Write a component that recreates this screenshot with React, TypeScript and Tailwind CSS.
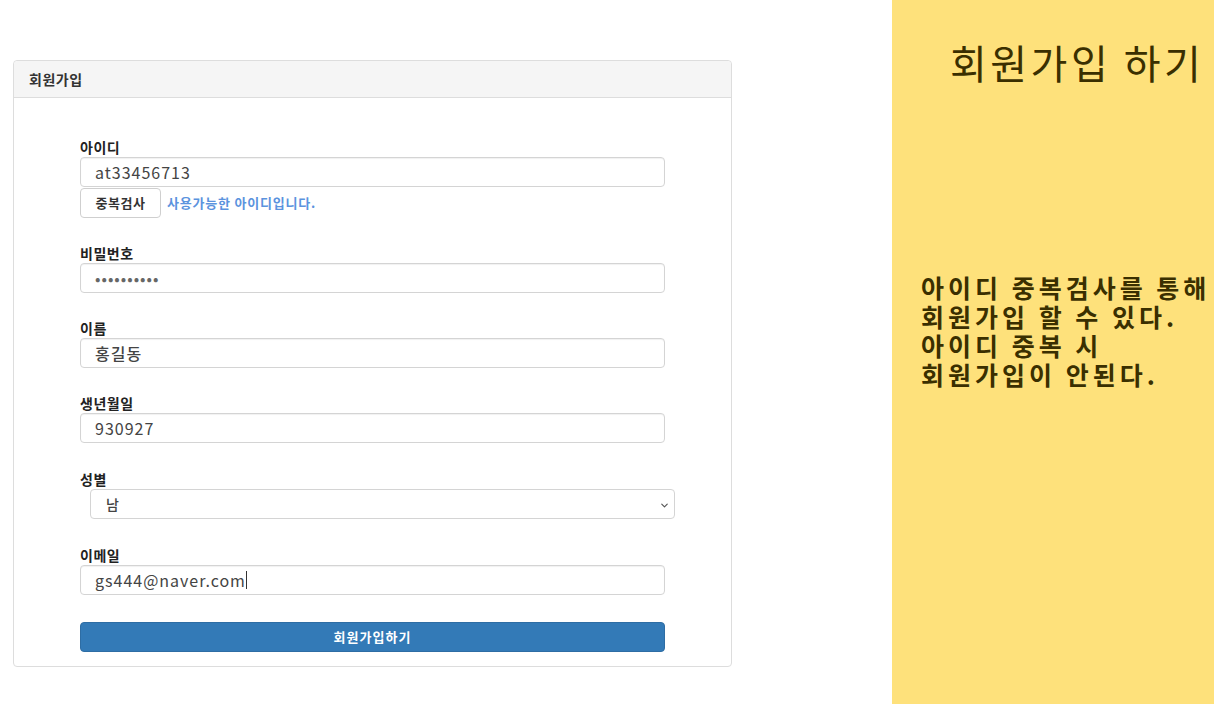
import { ChevronDown } from "lucide-react"

const KR = "font-['Noto_Sans_CJK_KR','Noto_Sans',sans-serif]"

function Field(props: { label: string; className?: string; children: React.ReactNode }) {
    return (
        <div className={props.className}>
            <div className="h-[19px] text-[14px] leading-[18px] font-bold tracking-[0.5px] text-[#222]">{props.label}</div>
            {props.children}
        </div>
    )
}

function TextBox(props: { value: string; type?: string; className?: string }) {
    return (
        <input
            readOnly
            type={props.type ?? "text"}
            value={props.value}
            className={`block w-[585px] h-[30px] rounded-[4px] border border-[#d4d4d4] bg-white px-[14px] text-[16px] tracking-[1px] text-[#444] shadow-[inset_0_1px_1px_rgba(0,0,0,0.06)] outline-none ${props.className ?? ""}`}
        />
    )
}

export default function App() {
    return (
        <div className={`flex w-[1214px] h-[704px] bg-white ${KR}`}>
            <div className="w-[892px] shrink-0 pt-[60px] pl-[13px]">
                <div className="w-[719px] rounded-[4px] border border-[#dddddd] bg-white">
                    <div className="h-[37px] flex items-center px-[15px] bg-[#f5f5f5] border-b border-[#dddddd] rounded-t-[4px] text-[14px] tracking-[0.5px] font-bold text-[#333]">
                        회원가입
                    </div>

                    <div className="pl-[66px] pt-[40px] pb-[14px]">
                        <Field label="아이디">
                            <TextBox value="at33456713" />
                            <div className="flex items-center gap-[6px] mt-[1px]">
                                <button className="w-[81px] h-[30px] rounded-[4px] border border-[#cfcfcf] bg-white text-[13px] tracking-[0.5px] font-bold text-[#333]">
                                    중복검사
                                </button>
                                <span className="text-[13px] tracking-[0.8px] font-bold text-[#5b93de]">사용가능한 아이디입니다.</span>
                            </div>
                        </Field>

                        <Field label="비밀번호" className="mt-[26px]">
                            <TextBox value="••••••••••" className="text-[9px] tracking-[0.5px] text-[#666]" />
                        </Field>

                        <Field label="이름" className="mt-[26px]">
                            <TextBox value="홍길동" className="text-[14px] tracking-[0.5px] font-medium" />
                        </Field>

                        <Field label="생년월일" className="mt-[26px]">
                            <TextBox value="930927" />
                        </Field>

                        <Field label="성별" className="mt-[27px]">
                            <div className="relative ml-[10px] w-[585px] h-[30px] rounded-[4px] border border-[#d4d4d4] bg-white flex items-center pl-[15px] text-[14px] font-medium text-[#444]">
                                남
                                <ChevronDown size={11} strokeWidth={2.5} className="absolute right-[4px] top-[10px] text-[#555]" />
                            </div>
                        </Field>

                        <Field label="이메일" className="mt-[27px]">
                            <div className="w-[585px] h-[30px] rounded-[4px] border border-[#d4d4d4] bg-white flex items-center px-[14px] text-[16px] tracking-[1px] text-[#444] shadow-[inset_0_1px_1px_rgba(0,0,0,0.06)]">
                                gs444@naver.com
                                <span className="w-px h-[18px] bg-[#333]" />
                            </div>
                        </Field>

                        <button className="mt-[27px] w-[585px] h-[30px] rounded-[4px] border border-[#2e6da4] bg-[#337ab7] text-[13px] tracking-[1px] font-bold text-white">
                            회원가입하기
                        </button>
                    </div>
                </div>
            </div>

            <div className="flex-1 bg-[#fee17b] text-[#3a2f00]">
                <h1 className="pt-[36px] pl-[58px] text-[40px] leading-[52px] tracking-[3.5px] whitespace-nowrap font-normal">회원가입 하기</h1>
                <div className="mt-[185px] pl-[29px] text-[25px] leading-[29px] tracking-[4px] font-bold whitespace-nowrap">
                    <p>아이디 중복검사를 통해</p>
                    <p>회원가입 할 수 있다.</p>
                    <p>아이디 중복 시</p>
                    <p>회원가입이 안된다.</p>
                </div>
            </div>
        </div>
    )
}
